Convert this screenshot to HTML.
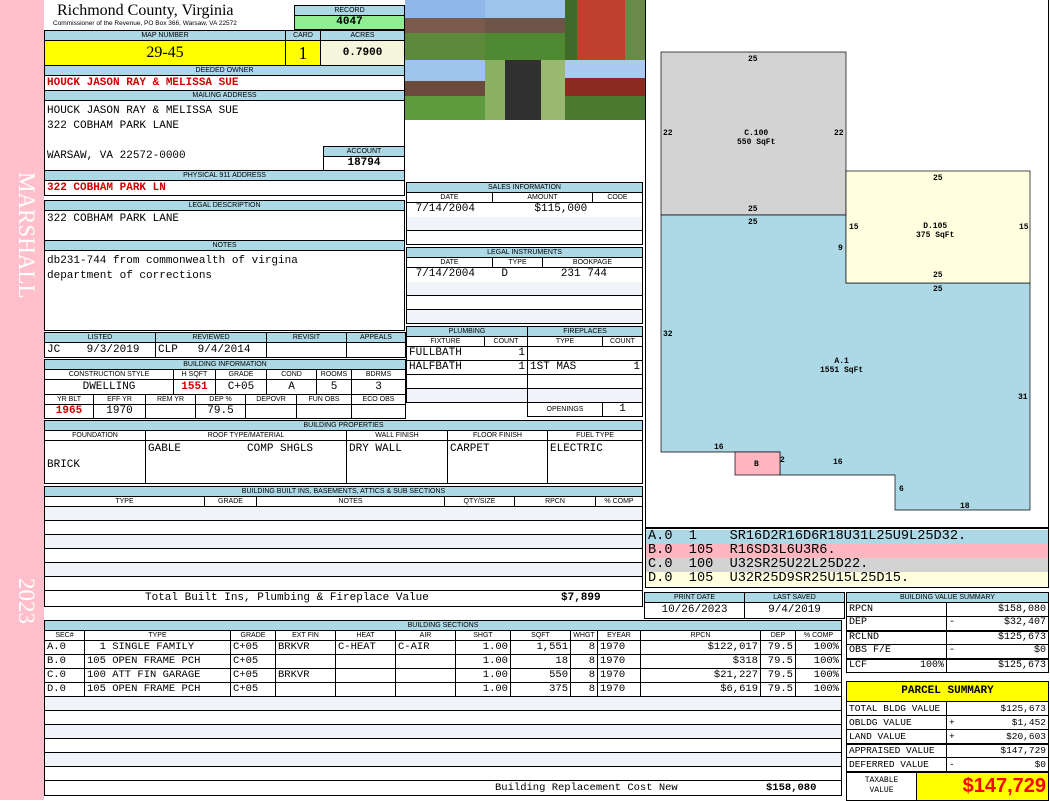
<!DOCTYPE html>
<html><head><meta charset="utf-8"><style>
*{box-sizing:border-box;margin:0;padding:0}
body{width:1050px;height:800px;position:relative;background:#fff;overflow:hidden;font-family:"Liberation Mono",monospace;font-size:11px;color:#000}
.a{position:absolute}
table{border-collapse:collapse;table-layout:fixed;width:100%}
td{border:1px solid #000;padding:0 2px;white-space:nowrap;overflow:hidden;line-height:1}
.h td,td.h{background:#add8e6;font-family:"Liberation Sans",sans-serif;font-size:7px;text-align:center;height:10px}
.s td{font-family:"Liberation Sans",sans-serif;font-size:7px;text-align:center;height:10px}
.r{text-align:right}.c{text-align:center}
.red{color:#d00000;font-weight:bold}
.alt{background:#f0f3f7}
.sk{font-family:"Liberation Mono",monospace;font-size:8px;font-weight:bold;position:absolute}
</style></head><body>
<div class="a" style="left:0;top:0;width:44px;height:800px;background:#ffc0cb"></div>
<div class="a" style="left:7px;top:172px;width:32px;height:150px;color:#fff;font-family:'Liberation Serif',serif;font-size:23px;writing-mode:vertical-rl;">MARSHALL</div>
<div class="a" style="left:7px;top:578px;width:32px;color:#fff;font-family:'Liberation Serif',serif;font-size:23px;writing-mode:vertical-rl;">2023</div>

<div class="a" style="left:57px;top:2px;font-family:'Liberation Serif',serif;font-size:16px">Richmond County, Virginia</div>
<div class="a" style="left:53px;top:20px;font-family:'Liberation Sans',sans-serif;font-size:6.5px">Commissioner of the Revenue, PO Box 366, Warsaw, VA 22572</div>
<div class="a" style="left:294px;top:5px;width:111px"><table><tr class="h"><td>RECORD</td></tr><tr><td class="c" style="background:#90ee90;height:14px;font-weight:bold">4047</td></tr></table></div>

<div class="a" style="left:44px;top:30px;width:361px"><table>
<colgroup><col style="width:241px"><col style="width:35px"><col></colgroup>
<tr class="h"><td>MAP NUMBER</td><td>CARD</td><td>ACRES</td></tr>
<tr><td class="c" style="background:#ffff00;height:25px;font-family:'Liberation Serif',serif;font-size:16px">29-45</td><td class="c" style="background:#ffff00;font-family:'Liberation Serif',serif;font-size:18px">1</td><td class="c" style="background:#f5f5dc;font-weight:bold">0.7900</td></tr>
<tr class="h"><td colspan="3">DEEDED OWNER</td></tr>
<tr><td colspan="3" class="red" style="height:15px">HOUCK JASON RAY &amp; MELISSA SUE</td></tr>
<tr class="h"><td colspan="3">MAILING ADDRESS</td></tr>
<tr><td colspan="3" style="height:70px;vertical-align:top;padding-top:3px;line-height:15px">HOUCK JASON RAY &amp; MELISSA SUE<br>322 COBHAM PARK LANE<br><br>WARSAW, VA 22572-0000</td></tr>
<tr class="h"><td colspan="3">PHYSICAL 911 ADDRESS</td></tr>
<tr><td colspan="3" class="red" style="height:15px">322 COBHAM PARK LN</td></tr>
</table></div>
<div class="a" style="left:323px;top:146px;width:82px"><table><tr class="h"><td>ACCOUNT</td></tr><tr><td class="c" style="height:14px;font-weight:bold;background:#fff">18794</td></tr></table></div>

<div class="a" style="left:44px;top:200px;width:361px"><table>
<tr class="h"><td>LEGAL DESCRIPTION</td></tr>
<tr><td style="height:30px;vertical-align:top;padding-top:3px">322 COBHAM PARK LANE</td></tr>
<tr class="h"><td>NOTES</td></tr>
<tr><td style="height:80px;vertical-align:top;padding-top:3px;line-height:15px">db231-744 from commonwealth of virgina<br>department of corrections</td></tr>
</table></div>

<div class="a" style="left:44px;top:332px;width:362px"><table>
<colgroup><col style="width:111px"><col style="width:111px"><col style="width:80px"><col></colgroup>
<tr class="h"><td>LISTED</td><td>REVIEWED</td><td>REVISIT</td><td>APPEALS</td></tr>
<tr><td style="height:15px">JC&nbsp;&nbsp;&nbsp;&nbsp;9/3/2019</td><td>CLP&nbsp;&nbsp;&nbsp;9/4/2014</td><td></td><td></td></tr></table></div>

<div class="a" style="left:44px;top:359px;width:362px"><table>
<colgroup><col style="width:49px"><col style="width:52px"><col style="width:28px"><col style="width:22px"><col style="width:20px"><col style="width:30px"><col style="width:21px"><col style="width:30px"><col style="width:20px"><col style="width:25px"><col style="width:10px"><col></colgroup>
<tr class="h"><td colspan="12">BUILDING INFORMATION</td></tr>
<tr class="s"><td colspan="3">CONSTRUCTION STYLE</td><td colspan="2">H SQFT</td><td colspan="2">GRADE</td><td colspan="2">COND</td><td colspan="2">ROOMS</td><td>BDRMS</td></tr>
<tr><td colspan="3" class="c" style="height:15px">DWELLING</td><td colspan="2" class="c red">1551</td><td colspan="2" class="c">C+05</td><td colspan="2" class="c">A</td><td colspan="2" class="c">5</td><td class="c">3</td></tr>
<tr class="s"><td>YR BLT</td><td>EFF YR</td><td colspan="2">REM YR</td><td colspan="2">DEP %</td><td colspan="2">DEPOVR</td><td colspan="3">FUN OBS</td><td>ECO OBS</td></tr>
<tr><td class="c red" style="height:14px">1965</td><td class="c">1970</td><td colspan="2"></td><td colspan="2" class="c">79.5</td><td colspan="2"></td><td colspan="3"></td><td></td></tr>
</table></div>

<!-- photos -->
<div class="a" style="left:405px;top:0;width:80px;height:60px;background:linear-gradient(#8fb8e8 0 30%,#7a5a4a 30% 55%,#5c8a3a 55%)"></div>
<div class="a" style="left:485px;top:0;width:80px;height:60px;background:linear-gradient(#9fc4ec 0 30%,#6e5548 30% 55%,#4f8a32 55%)"></div>
<div class="a" style="left:565px;top:0;width:80px;height:60px;background:linear-gradient(90deg,#3f6a2a 0 15%,#c04030 15% 75%,#6a8a4a 75%)"></div>
<div class="a" style="left:405px;top:60px;width:80px;height:60px;background:linear-gradient(#9fc4ec 0 35%,#6a4a3a 35% 60%,#5e9a3e 60%)"></div>
<div class="a" style="left:485px;top:60px;width:80px;height:60px;background:linear-gradient(90deg,#8ab060 0 25%,#303030 25% 70%,#9ab870 70%)"></div>
<div class="a" style="left:565px;top:60px;width:80px;height:60px;background:linear-gradient(#aacaf0 0 30%,#8a2a20 30% 60%,#4a7a30 60%)"></div>

<div class="a" style="left:406px;top:182px;width:237px"><table>
<colgroup><col style="width:86px"><col style="width:100px"><col></colgroup>
<tr class="h"><td colspan="3">SALES INFORMATION</td></tr>
<tr class="s"><td>DATE</td><td>AMOUNT</td><td>CODE</td></tr>
<tr><td colspan="3" style="height:14px;border-bottom:0">&nbsp;7/14/2004&nbsp;&nbsp;&nbsp;&nbsp;&nbsp;&nbsp;&nbsp;&nbsp;&nbsp;$115,000</td></tr>
<tr><td colspan="3" class="alt" style="height:14px;border-top:0"></td></tr>
<tr><td colspan="3" style="height:14px"></td></tr>
</table></div>
<div class="a" style="left:406px;top:247px;width:237px"><table>
<colgroup><col style="width:86px"><col style="width:50px"><col></colgroup>
<tr class="h"><td colspan="3">LEGAL INSTRUMENTS</td></tr>
<tr class="s"><td>DATE</td><td>TYPE</td><td>BOOKPAGE</td></tr>
<tr><td colspan="3" style="height:14px;border-bottom:0">&nbsp;7/14/2004&nbsp;&nbsp;&nbsp;&nbsp;D&nbsp;&nbsp;&nbsp;&nbsp;&nbsp;&nbsp;&nbsp;&nbsp;231 744</td></tr>
<tr><td colspan="3" class="alt" style="height:14px;border-top:0"></td></tr>
<tr><td colspan="3" style="height:14px"></td></tr>
<tr><td colspan="3" class="alt" style="height:14px"></td></tr>
</table></div>

<div class="a" style="left:406px;top:326px;width:237px"><table>
<colgroup><col style="width:78px"><col style="width:43px"><col style="width:75px"><col></colgroup>
<tr class="h"><td colspan="2">PLUMBING</td><td colspan="2">FIREPLACES</td></tr>
<tr class="s"><td>FIXTURE</td><td>COUNT</td><td>TYPE</td><td>COUNT</td></tr>
<tr><td style="height:14px;border-right:0">FULLBATH</td><td class="r" style="border-left:0">1</td><td colspan="2"></td></tr>
<tr><td style="height:14px;border-right:0">HALFBATH</td><td class="r" style="border-left:0">1</td><td style="border-right:0">1ST MAS</td><td class="r" style="border-left:0">1</td></tr>
<tr><td colspan="2" style="height:14px"></td><td colspan="2"></td></tr>
<tr><td colspan="2" class="alt" style="height:14px;border-bottom:0"></td><td colspan="2" class="alt"></td></tr>
<tr><td colspan="2" style="height:14px;border:0;border-top:1px solid #000"></td><td class="s c" style="font-family:'Liberation Sans',sans-serif;font-size:7px">OPENINGS</td><td class="c">1</td></tr>
</table></div>

<div class="a" style="left:44px;top:420px;width:599px"><table>
<colgroup><col style="width:101px"><col style="width:201px"><col style="width:101px"><col style="width:100px"><col></colgroup>
<tr class="h"><td colspan="5">BUILDING PROPERTIES</td></tr>
<tr class="s"><td>FOUNDATION</td><td>ROOF TYPE/MATERIAL</td><td>WALL FINISH</td><td>FLOOR FINISH</td><td>FUEL TYPE</td></tr>
<tr style="height:43px;vertical-align:top"><td style="vertical-align:middle;padding-top:6px">BRICK</td><td style="padding-top:3px">GABLE&nbsp;&nbsp;&nbsp;&nbsp;&nbsp;&nbsp;&nbsp;&nbsp;&nbsp;&nbsp;COMP SHGLS</td><td style="padding-top:3px">DRY WALL</td><td style="padding-top:3px">CARPET</td><td style="padding-top:3px">ELECTRIC</td></tr>
</table></div>

<div class="a" style="left:44px;top:486px;width:599px"><table>
<colgroup><col style="width:160px"><col style="width:52px"><col style="width:188px"><col style="width:70px"><col style="width:81px"><col></colgroup>
<tr class="h"><td colspan="6">BUILDING BUILT INS, BASEMENTS, ATTICS &amp; SUB SECTIONS</td></tr>
<tr class="s"><td>TYPE</td><td>GRADE</td><td>NOTES</td><td>QTY/SIZE</td><td>RPCN</td><td>% COMP</td></tr>
<tr><td colspan="6" class="alt" style="height:14px"></td></tr>
<tr><td colspan="6" style="height:14px"></td></tr>
<tr><td colspan="6" class="alt" style="height:14px"></td></tr>
<tr><td colspan="6" style="height:14px"></td></tr>
<tr><td colspan="6" class="alt" style="height:14px"></td></tr>
<tr><td colspan="6" style="height:14px"></td></tr>
<tr><td colspan="6" style="height:16px;padding-left:100px">Total Built Ins, Plumbing &amp; Fireplace Value<span style="position:absolute;left:517px;font-weight:bold">$7,899</span></td></tr>
</table></div>

<div class="a" style="left:644px;top:592px;width:201px"><table>
<tr class="h"><td>PRINT DATE</td><td>LAST SAVED</td></tr>
<tr><td class="c" style="height:16px">10/26/2023</td><td class="c">9/4/2019</td></tr></table></div>

<div class="a" style="left:44px;top:620px;width:798px"><table style="font-size:10.5px">
<colgroup><col style="width:40px"><col style="width:146px"><col style="width:45px"><col style="width:60px"><col style="width:60px"><col style="width:60px"><col style="width:55px"><col style="width:60px"><col style="width:27px"><col style="width:43px"><col style="width:120px"><col style="width:35px"><col></colgroup>
<tr class="h"><td colspan="13">BUILDING SECTIONS</td></tr>
<tr class="s"><td>SEC#</td><td>TYPE</td><td>GRADE</td><td>EXT FIN</td><td>HEAT</td><td>AIR</td><td>SHGT</td><td>SQFT</td><td>WHGT</td><td>EYEAR</td><td>RPCN</td><td>DEP</td><td>% COMP</td></tr>
<tr style="height:14px"><td>A.0</td><td>&nbsp;&nbsp;1 SINGLE FAMILY</td><td>C+05</td><td>BRKVR</td><td>C-HEAT</td><td>C-AIR</td><td class="r">1.00</td><td class="r">1,551</td><td class="r">8</td><td>1970</td><td class="r">$122,017</td><td class="r">79.5</td><td class="r">100%</td></tr>
<tr style="height:14px"><td>B.0</td><td>105 OPEN FRAME PCH</td><td>C+05</td><td></td><td></td><td></td><td class="r">1.00</td><td class="r">18</td><td class="r">8</td><td>1970</td><td class="r">$318</td><td class="r">79.5</td><td class="r">100%</td></tr>
<tr style="height:14px"><td>C.0</td><td>100 ATT FIN GARAGE</td><td>C+05</td><td>BRKVR</td><td></td><td></td><td class="r">1.00</td><td class="r">550</td><td class="r">8</td><td>1970</td><td class="r">$21,227</td><td class="r">79.5</td><td class="r">100%</td></tr>
<tr style="height:14px"><td>D.0</td><td>105 OPEN FRAME PCH</td><td>C+05</td><td></td><td></td><td></td><td class="r">1.00</td><td class="r">375</td><td class="r">8</td><td>1970</td><td class="r">$6,619</td><td class="r">79.5</td><td class="r">100%</td></tr>
<tr><td colspan="13" class="alt" style="height:14px"></td></tr>
<tr><td colspan="13" style="height:14px"></td></tr>
<tr><td colspan="13" class="alt" style="height:14px"></td></tr>
<tr><td colspan="13" style="height:14px"></td></tr>
<tr><td colspan="13" class="alt" style="height:14px"></td></tr>
<tr><td colspan="13" style="height:14px"></td></tr>
<tr><td colspan="13" style="height:15px;padding-left:450px">Building Replacement Cost New<span style="position:absolute;left:722px;font-weight:bold">$158,080</span></td></tr>
</table></div>

<!-- sketch -->
<div class="a" style="left:645px;top:0;width:404px;height:528px;border:1px solid #000;border-top:0"></div>
<svg class="a" style="left:645px;top:0" width="404" height="528">
<rect x="16" y="52" width="185" height="163" fill="#d3d3d3" stroke="#000" stroke-width=".7"/>
<polygon points="16,215 201,215 201,283 385,283 385,510 250,510 250,475 135,475 135,452 16,452" fill="#add8e6" stroke="#000" stroke-width=".7"/>
<rect x="201" y="171" width="184" height="112" fill="#ffffe0" stroke="#000" stroke-width=".7"/>
<rect x="90" y="452" width="45" height="23" fill="#ffb6c1" stroke="#000" stroke-width=".7"/>
</svg>
<div class="sk" style="left:748px;top:55px">25</div>
<div class="sk" style="left:663px;top:129px">22</div><div class="sk" style="left:834px;top:129px">22</div>
<div class="sk" style="left:737px;top:129px;text-align:center">C.100<br>550 SqFt</div>
<div class="sk" style="left:748px;top:205px">25</div><div class="sk" style="left:748px;top:218px">25</div>
<div class="sk" style="left:933px;top:174px">25</div>
<div class="sk" style="left:849px;top:223px">15</div><div class="sk" style="left:1019px;top:223px">15</div>
<div class="sk" style="left:916px;top:222px;text-align:center">D.105<br>375 SqFt</div>
<div class="sk" style="left:838px;top:244px">9</div>
<div class="sk" style="left:933px;top:271px">25</div><div class="sk" style="left:933px;top:285px">25</div>
<div class="sk" style="left:663px;top:330px">32</div>
<div class="sk" style="left:820px;top:357px;text-align:center">A.1<br>1551 SqFt</div>
<div class="sk" style="left:1018px;top:393px">31</div>
<div class="sk" style="left:714px;top:443px">16</div>
<div class="sk" style="left:754px;top:460px">B</div>
<div class="sk" style="left:780px;top:456px">2</div>
<div class="sk" style="left:833px;top:458px">16</div>
<div class="sk" style="left:899px;top:485px">6</div>
<div class="sk" style="left:960px;top:502px">18</div>

<div class="a" style="left:645px;top:528px;width:404px;height:60px;border:1px solid #000;font-size:13.6px;line-height:14px;padding-top:1px">
<div style="background:#add8e6;padding-left:2px;white-space:pre">A.0  1    SR16D2R16D6R18U31L25U9L25D32.</div>
<div style="background:#ffb6c1;padding-left:2px;white-space:pre">B.0  105  R16SD3L6U3R6.</div>
<div style="background:#d3d3d3;padding-left:2px;white-space:pre">C.0  100  U32SR25U22L25D22.</div>
<div style="background:#ffffe0;padding-left:2px;white-space:pre">D.0  105  U32R25D9SR25U15L25D15.</div>
</div>

<div class="a" style="left:846px;top:592px;width:203px"><table style="font-size:10px">
<colgroup><col style="width:100px"><col></colgroup>
<tr class="h"><td colspan="2">BUILDING VALUE SUMMARY</td></tr>
<tr style="height:14px"><td>RPCN</td><td class="r">$158,080</td></tr>
<tr style="height:14px"><td>DEP</td><td class="r"><span style="float:left">-</span>$32,407</td></tr>
<tr style="height:14px;border-top:2px solid #000"><td>RCLND</td><td class="r">$125,673</td></tr>
<tr style="height:14px"><td>OBS F/E</td><td class="r"><span style="float:left">-</span>$0</td></tr>
<tr style="height:14px;border-top:2px solid #000"><td>LCF<span style="float:right">100%</span></td><td class="r">$125,673</td></tr>
</table></div>

<div class="a" style="left:846px;top:681px;width:203px"><table style="font-size:9.5px">
<colgroup><col style="width:70px"><col style="width:30px"><col></colgroup>
<tr><td colspan="3" class="c" style="background:#ffff00;height:20px;font-weight:bold;font-size:11px">PARCEL SUMMARY</td></tr>
<tr style="height:14px"><td colspan="2">TOTAL BLDG VALUE</td><td class="r">$125,673</td></tr>
<tr style="height:14px"><td colspan="2">OBLDG VALUE</td><td class="r"><span style="float:left">+</span>$1,452</td></tr>
<tr style="height:14px"><td colspan="2">LAND VALUE</td><td class="r"><span style="float:left">+</span>$20,603</td></tr>
<tr style="height:14px;border-top:2px solid #000"><td colspan="2">APPRAISED VALUE</td><td class="r">$147,729</td></tr>
<tr style="height:14px"><td colspan="2">DEFERRED VALUE</td><td class="r"><span style="float:left">-</span>$0</td></tr>
<tr style="height:29px;border-top:2px solid #000"><td class="c" style="font-size:8px;line-height:10px">TAXABLE<br>VALUE</td><td colspan="2" class="r" style="background:#ffff00;color:#ff0000;font-family:'Liberation Sans',sans-serif;font-weight:bold;font-size:20px">$147,729</td></tr>
</table></div>
</body></html>
